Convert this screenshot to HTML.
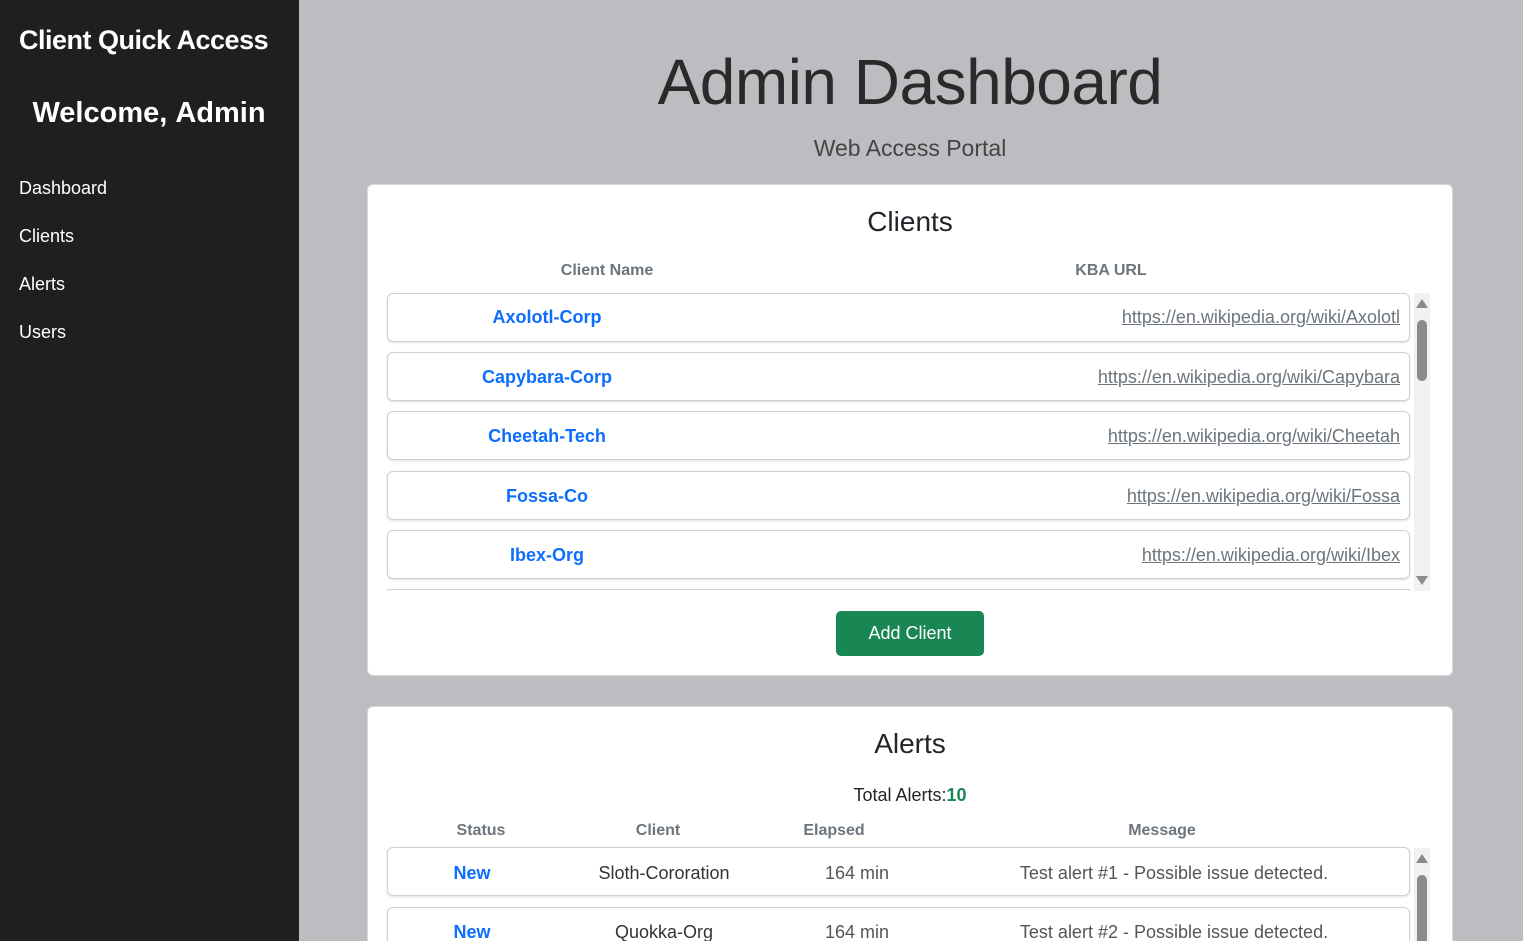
<!DOCTYPE html>
<html><head><meta charset="utf-8"><style>
*{margin:0;padding:0;box-sizing:border-box}
html,body{width:1523px;height:941px;overflow:hidden}
body{background:#bcbdc1;font-family:"Liberation Sans",sans-serif;position:relative;color:#212529}
.a{position:absolute;white-space:nowrap}
.c{transform:translateX(-50%)}
.r{transform:translateX(-100%)}
#side{position:absolute;left:0;top:0;width:299px;height:941px;background:#1f1f1f;color:#fff}
.card{position:absolute;left:367px;width:1086px;background:#fff;border-radius:6px;border:1px solid #d8d8d8}
.row{position:absolute;left:387px;width:1023px;height:49px;border:1px solid #d0d0d0;border-radius:6px;background:#fff;box-shadow:0 1px 2px rgba(0,0,0,.12)}
.nm{color:#0d6efd;font-weight:bold;font-size:18px}
.url{color:#6c757d;text-decoration:underline;font-size:18px}
.th{color:#6c757d;font-weight:bold;font-size:16px}
.td{color:#555;font-size:18px}
.sb{position:absolute;left:1414px;width:16px;background:#f1f1f1}
.thumb{position:absolute;left:3px;width:10px;background:#8a8a8a;border-radius:5px}
.up{position:absolute;left:2px;width:0;height:0;border-left:6px solid transparent;border-right:6px solid transparent;border-bottom:9px solid #8a8a8a}
.dn{position:absolute;left:2px;width:0;height:0;border-left:6px solid transparent;border-right:6px solid transparent;border-top:9px solid #8a8a8a}
</style></head><body>
<div id="side">
<div class="a" style="left:19px;top:25px;font-size:27px;font-weight:bold;letter-spacing:-0.5px">Client Quick Access</div>
<div class="a" style="left:149px;top:97px;font-size:29px;font-weight:bold"><span class="a c" style="left:0;top:0">Welcome,&nbsp;Admin</span></div>
<div class="a" style="left:19px;top:178px;font-size:18px">Dashboard</div>
<div class="a" style="left:19px;top:226px;font-size:18px">Clients</div>
<div class="a" style="left:19px;top:274px;font-size:18px">Alerts</div>
<div class="a" style="left:19px;top:322px;font-size:18px">Users</div>
</div>
<div class="a c" style="left:910px;top:45px;font-size:64px;color:#2a2a2a;letter-spacing:-0.5px">Admin Dashboard</div>
<div class="a c" style="left:910px;top:135px;font-size:23px;color:#444">Web Access Portal</div>

<div class="card" style="top:184px;height:492px"></div>
<div class="a c" style="left:910px;top:206px;font-size:28px">Clients</div>
<div class="a c th" style="left:607px;top:262px">Client Name</div>
<div class="a c th" style="left:1111px;top:262px">KBA URL</div>
<div class="row" style="top:293px"></div>
<div class="row" style="top:352px"></div>
<div class="row" style="top:411px"></div>
<div class="row" style="top:471px"></div>
<div class="row" style="top:530px"></div>
<div class="row" style="top:589px;height:3px;border-bottom:none;box-shadow:none"></div>
<div style="position:absolute;left:380px;top:591px;width:1060px;height:10px;background:#fff"></div>
<div class="a c nm" style="left:547px;top:307px">Axolotl-Corp</div>
<div class="a c nm" style="left:547px;top:367px">Capybara-Corp</div>
<div class="a c nm" style="left:547px;top:426px">Cheetah-Tech</div>
<div class="a c nm" style="left:547px;top:486px">Fossa-Co</div>
<div class="a c nm" style="left:547px;top:545px">Ibex-Org</div>
<div class="a r url" style="left:1400px;top:307px">https://en.wikipedia.org/wiki/Axolotl</div>
<div class="a r url" style="left:1400px;top:367px">https://en.wikipedia.org/wiki/Capybara</div>
<div class="a r url" style="left:1400px;top:426px">https://en.wikipedia.org/wiki/Cheetah</div>
<div class="a r url" style="left:1400px;top:486px">https://en.wikipedia.org/wiki/Fossa</div>
<div class="a r url" style="left:1400px;top:545px">https://en.wikipedia.org/wiki/Ibex</div>
<div class="sb" style="top:293px;height:298px"><div class="up" style="top:6px"></div><div class="thumb" style="top:27px;height:61px"></div><div class="dn" style="top:283px"></div></div>
<div style="position:absolute;left:836px;top:611px;width:148px;height:45px;background:#198754;border-radius:5px;color:#fff;font-size:18px;text-align:center;line-height:45px">Add Client</div>

<div class="card" style="top:706px;height:240px"></div>
<div class="a c" style="left:910px;top:728px;font-size:28px">Alerts</div>
<div class="a c" style="left:910px;top:785px;font-size:18px">Total Alerts:<b style="color:#198754">10</b></div>
<div class="a c th" style="left:481px;top:822px">Status</div>
<div class="a c th" style="left:658px;top:822px">Client</div>
<div class="a c th" style="left:834px;top:822px">Elapsed</div>
<div class="a c th" style="left:1162px;top:822px">Message</div>
<div class="row" style="top:847px"></div>
<div class="row" style="top:907px"></div>
<div class="a c nm" style="left:472px;top:863px">New</div>
<div class="a c td" style="left:664px;top:863px;color:#333">Sloth-Cororation</div>
<div class="a c td" style="left:857px;top:863px">164 min</div>
<div class="a c td" style="left:1174px;top:863px">Test alert #1 - Possible issue detected.</div>
<div class="a c nm" style="left:472px;top:922px">New</div>
<div class="a c td" style="left:664px;top:922px;color:#333">Quokka-Org</div>
<div class="a c td" style="left:857px;top:922px">164 min</div>
<div class="a c td" style="left:1174px;top:922px">Test alert #2 - Possible issue detected.</div>
<div class="sb" style="top:848px;height:100px"><div class="up" style="top:6px"></div><div class="thumb" style="top:27px;height:80px"></div></div>
</body></html>
